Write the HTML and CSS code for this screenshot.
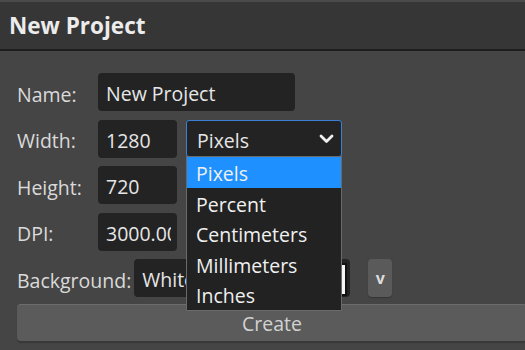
FILE: index.html
```html
<!DOCTYPE html>
<html lang="en">
  <head>
    <meta charset="UTF-8" />
    <title>New Project</title>
    <link rel="stylesheet" href="styles.css">
  </head>
  <body>
    <div class="dialog">
      <div class="titleBar">New Project</div>

      <div class="content">
        <div class="row">
          <span class="label">Name:</span>
          <div class="field wide"><span class="text">New Project</span></div>
        </div>

        <div class="row">
          <span class="label">Width:</span>
          <div class="field small"><span class="text">1280</span></div>
          <div class="select">
            <span class="value">Pixels</span>
            <svg class="chevron" width="15" height="10" viewBox="0 0 15 10">
              <polyline points="2,2 7.5,7.5 13,2" fill="none" stroke="#f0f0f0" stroke-width="2.8" stroke-linecap="round" stroke-linejoin="round" />
            </svg>
            <ul class="options">
              <li class="selected">Pixels</li>
              <li>Percent</li>
              <li>Centimeters</li>
              <li>Millimeters</li>
              <li>Inches</li>
            </ul>
          </div>
        </div>

        <div class="row">
          <span class="label">Height:</span>
          <div class="field small"><span class="text">720</span></div>
        </div>

        <div class="row">
          <span class="label">DPI:</span>
          <div class="field small"><span class="text">3000.00</span></div>
        </div>

        <div class="row">
          <span class="label">Background:</span>
          <div class="field color">
            <span class="text">White</span>
            <span class="swatch"></span>
          </div>
          <button class="smallBtn">v</button>
        </div>

        <button class="createBtn">Create</button>
      </div>
    </div>
  </body>
</html>
```

FILE: styles.css
```css
* {
  margin: 0;
  padding: 0;
  box-sizing: border-box;
}
body {
  background-color: #454545;
  overflow: hidden;
  font-family: "Open Sans", "Liberation Sans", sans-serif;
}
.dialog {
  width: 544px;
  height: 350px;
  background-color: #454545;
}
.titleBar {
  height: 51px;
  padding: 8px 0 0 9px;
  background-color: #363636;
  border-top: 2px solid #4a4a4a;
  border-bottom: 2px solid #1e1e1e;
  color: #ececec;
  font-size: 22.5px;
  font-weight: bold;
}
.content {
  display: flex;
  flex-direction: column;
  gap: 8.5px;
  padding: 22px 0 0 17px;
}
.row {
  display: flex;
  align-items: center;
  height: 38px;
}
.label {
  min-width: 78px;
  margin-right: 3px;
  padding-top: 4px;
  color: #dadada;
  font-size: 19.5px;
  white-space: nowrap;
}
.field {
  height: 38px;
  padding: 2px 8px 0;
  background-color: #232323;
  border-radius: 4px;
  color: #e6e6e6;
  font-size: 19.5px;
  line-height: 38px;
  white-space: nowrap;
}
.field .text {
  display: block;
  overflow: hidden;
}
.field.wide {
  width: 197px;
}
.field.small {
  width: 79px;
  padding-right: 6px;
}
.field.color {
  position: relative;
  width: 216px;
}
.swatch {
  position: absolute;
  top: 4px;
  right: 3px;
  width: 50px;
  height: 33px;
  background-color: #f4f4f4;
  border: 2px solid #111;
}
.select {
  position: relative;
  display: flex;
  align-items: center;
  justify-content: space-between;
  width: 156px;
  height: 37px;
  margin-left: 9px;
  padding: 0 7px 0 10px;
  background-color: #232323;
  border: 1px solid #3b7fd6;
  border-radius: 3px;
  color: #e6e6e6;
  font-size: 19.5px;
}
.select .value {
  padding-top: 4px;
}
.chevron {
  margin-top: 1px;
}
.options {
  position: absolute;
  top: 35px;
  left: -1px;
  width: 156px;
  list-style: none;
  background-color: #222;
  border: 1px solid #6a6a6a;
  z-index: 10;
}
.options li {
  height: 30.6px;
  padding: 3px 0 0 9px;
  color: #f0f0f0;
  font-size: 19.5px;
  line-height: 28px;
}
.options li.selected {
  background-color: #1e90ff;
}
.smallBtn {
  width: 24px;
  height: 38px;
  margin-left: 18px;
  background-color: #5a5a5a;
  border: none;
  border-radius: 4px;
  box-shadow: 0 1px 1px #333;
  color: #dcdcdc;
  font-family: "Open Sans", "Liberation Sans", sans-serif;
  font-size: 16px;
  font-weight: bold;
}
.createBtn {
  width: 510px;
  height: 37px;
  margin-top: -1.5px;
  background-color: #5b5b5b;
  border: none;
  border-top: 1px solid #6c6c6c;
  border-radius: 4px;
  box-shadow: 0 2px 1px #383838;
  color: #d2d2d2;
  font-family: "Open Sans", "Liberation Sans", sans-serif;
  font-size: 19.5px;
}
```
